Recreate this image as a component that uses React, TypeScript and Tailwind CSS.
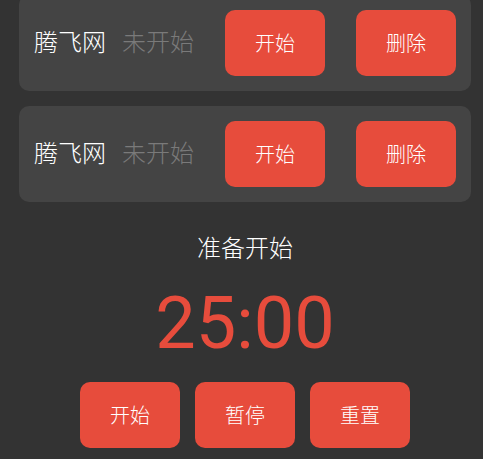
import React from "react";

// task rows shown above the timer
const tasks = [
  { id: 1, name: "腾飞网", status: "未开始" },
  { id: 2, name: "腾飞网", status: "未开始" },
];

function RedButton({ label, className = "" }: { label: string; className?: string }) {
  return (
    <button
      className={
        "w-[100px] h-[66px] shrink-0 rounded-[10px] bg-[#e74c3c] text-white text-[20px] font-light leading-none pt-[2px] " +
        className
      }
    >
      {label}
    </button>
  );
}

export default function App() {
  return (
    <div
      className="h-screen overflow-hidden bg-[#333333] flex flex-col justify-end pl-[19px] pr-[12px] pb-[11px]"
      style={{ fontFamily: "Roboto, 'Noto Sans CJK SC', sans-serif" }}
    >
      {/* task list */}
      <div className="flex flex-col gap-[15px] shrink-0">
        {tasks.map((t) => (
          <div key={t.id} className="flex items-center bg-[#444444] rounded-[10px] p-[15px]">
            <span className="text-white text-[24px] font-light leading-none">{t.name}</span>
            <span className="ml-[16px] text-[#7a7a7a] text-[24px] font-light leading-none">{t.status}</span>
            <RedButton label="开始" className="ml-auto" />
            <RedButton label="删除" className="ml-[31px]" />
          </div>
        ))}
      </div>

      {/* timer */}
      <div className="flex flex-col items-center shrink-0">
        <div className="mt-[35px] text-white text-[24px] font-light leading-none h-[24px]">准备开始</div>
        <div className="mt-[27px] text-[#e74c3c] text-[72px] leading-none h-[72px]">25:00</div>
        <div className="mt-[22px] flex gap-[15px]">
          <RedButton label="开始" />
          <RedButton label="暂停" />
          <RedButton label="重置" />
        </div>
      </div>
    </div>
  );
}
